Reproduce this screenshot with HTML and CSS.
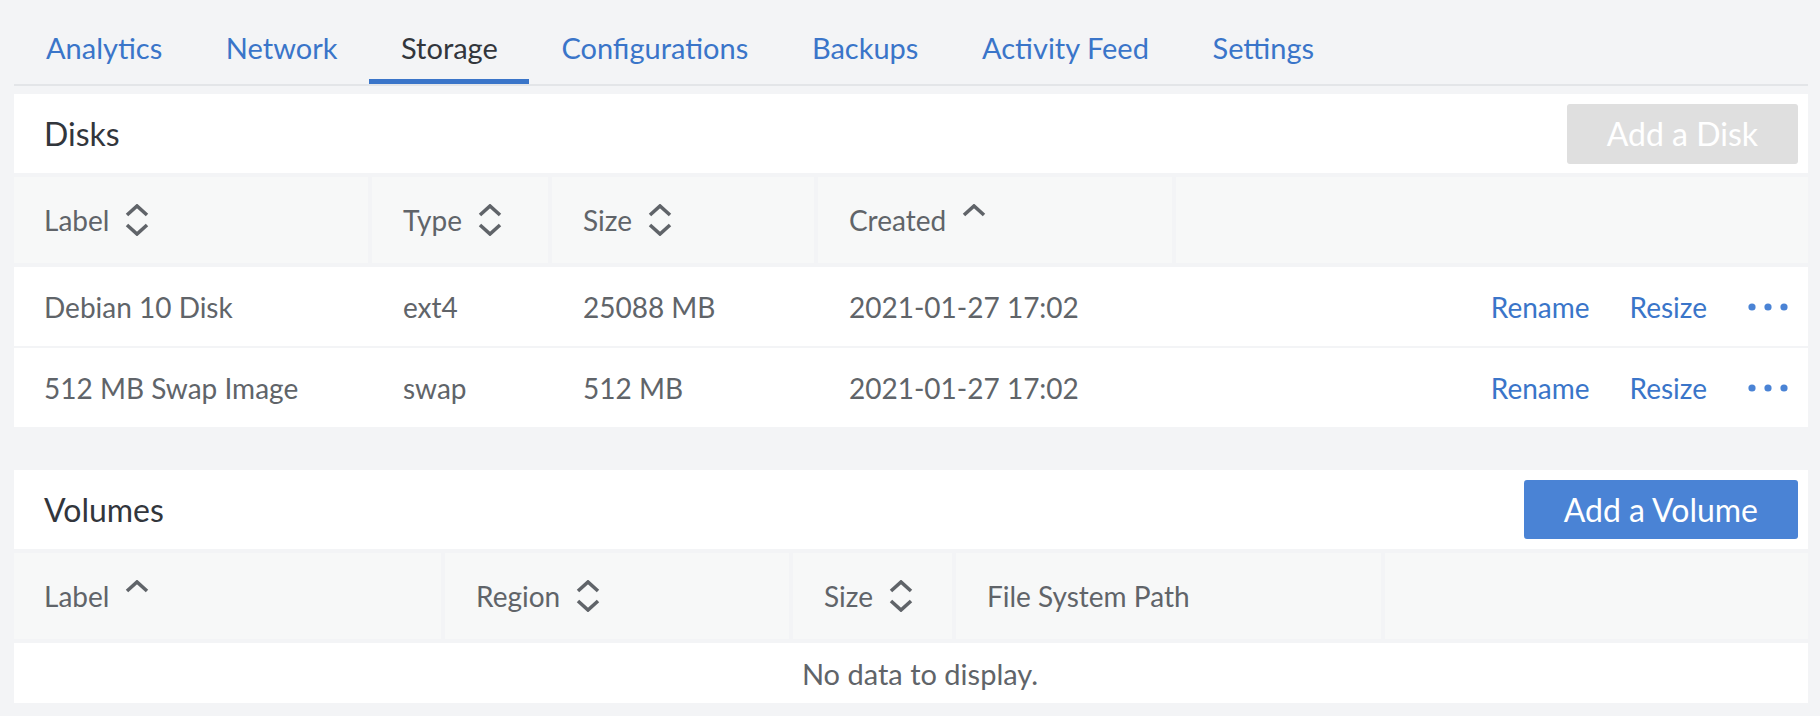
FILE: index.html
```html
<!DOCTYPE html>
<html lang="en">
<head>
<meta charset="utf-8">
<title>Storage</title>
<link rel="stylesheet" href="styles.css">
</head>
<body>
<div class="page">
  <nav class="tabs">
    <a class="tab">Analytics</a>
    <a class="tab">Network</a>
    <a class="tab active">Storage</a>
    <a class="tab">Configurations</a>
    <a class="tab">Backups</a>
    <a class="tab">Activity Feed</a>
    <a class="tab">Settings</a>
  </nav>

  <section class="panel disks">
    <div class="panel-head">
      <h2 class="panel-title">Disks</h2>
      <button class="btn btn-disabled">Add a Disk</button>
    </div>
    <table class="grid">
      <colgroup>
        <col class="c-d1"><col class="c-d2"><col class="c-d3"><col class="c-d4"><col>
      </colgroup>
      <thead>
        <tr>
          <th><span class="th-in">Label <svg class="sort" viewBox="0 0 24 32"><polyline points="2,11 12,2 22,11"/><polyline points="2,21 12,30 22,21"/></svg></span></th>
          <th><span class="th-in">Type <svg class="sort" viewBox="0 0 24 32"><polyline points="2,11 12,2 22,11"/><polyline points="2,21 12,30 22,21"/></svg></span></th>
          <th><span class="th-in">Size <svg class="sort" viewBox="0 0 24 32"><polyline points="2,11 12,2 22,11"/><polyline points="2,21 12,30 22,21"/></svg></span></th>
          <th><span class="th-in">Created <svg class="sort" viewBox="0 0 24 32"><polyline points="2,11 12,2 22,11"/></svg></span></th>
          <th></th>
        </tr>
      </thead>
      <tbody>
        <tr>
          <td>Debian 10 Disk</td>
          <td>ext4</td>
          <td>25088 MB</td>
          <td>2021-01-27 17:02</td>
          <td class="actions-cell"><div class="actions"><a class="link">Rename</a><a class="link">Resize</a><svg class="dots" viewBox="0 0 40 8"><circle cx="4" cy="4" r="3.6"/><circle cx="20" cy="4" r="3.6"/><circle cx="36" cy="4" r="3.6"/></svg></div></td>
        </tr>
        <tr>
          <td>512 MB Swap Image</td>
          <td>swap</td>
          <td>512 MB</td>
          <td>2021-01-27 17:02</td>
          <td class="actions-cell"><div class="actions"><a class="link">Rename</a><a class="link">Resize</a><svg class="dots" viewBox="0 0 40 8"><circle cx="4" cy="4" r="3.6"/><circle cx="20" cy="4" r="3.6"/><circle cx="36" cy="4" r="3.6"/></svg></div></td>
        </tr>
      </tbody>
    </table>
  </section>

  <section class="panel volumes">
    <div class="panel-head">
      <h2 class="panel-title">Volumes</h2>
      <button class="btn btn-primary">Add a Volume</button>
    </div>
    <table class="grid">
      <colgroup>
        <col class="c-v1"><col class="c-v2"><col class="c-v3"><col class="c-v4"><col>
      </colgroup>
      <thead>
        <tr>
          <th><span class="th-in">Label <svg class="sort" viewBox="0 0 24 32"><polyline points="2,11 12,2 22,11"/></svg></span></th>
          <th><span class="th-in">Region <svg class="sort" viewBox="0 0 24 32"><polyline points="2,11 12,2 22,11"/><polyline points="2,21 12,30 22,21"/></svg></span></th>
          <th><span class="th-in">Size <svg class="sort" viewBox="0 0 24 32"><polyline points="2,11 12,2 22,11"/><polyline points="2,21 12,30 22,21"/></svg></span></th>
          <th><span class="th-in">File System Path</span></th>
          <th></th>
        </tr>
      </thead>
      <tbody>
        <tr class="empty-row">
          <td colspan="5" class="empty">No data to display.</td>
        </tr>
      </tbody>
    </table>
  </section>
</div>
</body>
</html>
```

FILE: styles.css
```css
* { box-sizing: border-box; }

html, body {
  margin: 0;
  padding: 0;
  background: #f3f4f6;
  font-family: Lato, "Noto Sans", sans-serif;
  color: #606469;
}

.page {
  padding: 0 12px 0 14px;
}

/* Tabs */
.tabs {
  display: flex;
  border-bottom: 2px solid #e3e5e8;
}

.tab {
  display: block;
  font-size: 29px;
  line-height: 34px;
  padding: 31px 31.6px 14px 32px;
  color: #3a75c9;
  border-bottom: 5px solid transparent;
}

.tab.active {
  color: #32363c;
  border-bottom-color: #3a75c9;
}

/* Panels */
.panel {
  margin-top: 8px;
}

.panel.volumes {
  margin-top: 43px;
}

.panel-head {
  height: 79px;
  background: #fff;
  display: flex;
  align-items: center;
  justify-content: space-between;
  padding: 0 10px 0 30px;
  margin-bottom: 4px;
}

.panel-title {
  margin: 0;
  font-size: 32px;
  font-weight: 400;
  color: #32363c;
}

.btn {
  font-family: Lato, "Noto Sans", sans-serif;
  font-size: 32px;
  height: 60px;
  padding: 0 40px;
  border: 0;
  border-radius: 3px;
  color: #fff;
}

.btn-disabled {
  background: #dfdfdf;
}

.btn-primary {
  background: #4a83d5;
  height: 59px;
}

/* Tables */
.grid {
  width: 100%;
  border-collapse: collapse;
  table-layout: fixed;
  font-size: 28px;
}

.c-d1 { width: 356px; }
.c-d2 { width: 180px; }
.c-d3 { width: 266px; }
.c-d4 { width: 358px; }

.c-v1 { width: 429px; }
.c-v2 { width: 348px; }
.c-v3 { width: 163px; }
.c-v4 { width: 429px; }

.grid th {
  height: 88px;
  background: #f7f8f8;
  border-left: 4px solid #f3f4f6;
  border-bottom: 4px solid #f3f4f6;
  padding: 0 0 0 31px;
  text-align: left;
  font-weight: 400;
  color: #606469;
  white-space: nowrap;
}

.grid th:first-child {
  border-left: 0;
  padding-left: 30px;
}

.th-in {
  display: inline-flex;
  align-items: center;
  gap: 16px;
}

.sort {
  width: 24px;
  height: 32px;
  fill: none;
  stroke: #606469;
  stroke-width: 3.6;
  stroke-linejoin: miter;
}

.grid td {
  height: 82px;
  background: #fff;
  border-bottom: 2px solid #f3f4f6;
  padding: 0 0 0 33px;
  white-space: nowrap;
}

.grid td:first-child {
  padding-left: 30px;
}

.grid tbody tr:last-child td {
  border-bottom: 0;
  height: 80px;
}

.actions {
  display: flex;
  justify-content: flex-end;
  align-items: center;
  gap: 40px;
  padding-right: 20px;
}

.link {
  color: #3a75c9;
}

.dots {
  width: 40px;
  height: 8px;
  margin-left: 1px;
  fill: #4a83d5;
}

.grid tbody tr.empty-row td.empty {
  height: 62px;
  font-size: 29px;
  text-align: center;
  padding: 0 0 0 18px;
}
```
